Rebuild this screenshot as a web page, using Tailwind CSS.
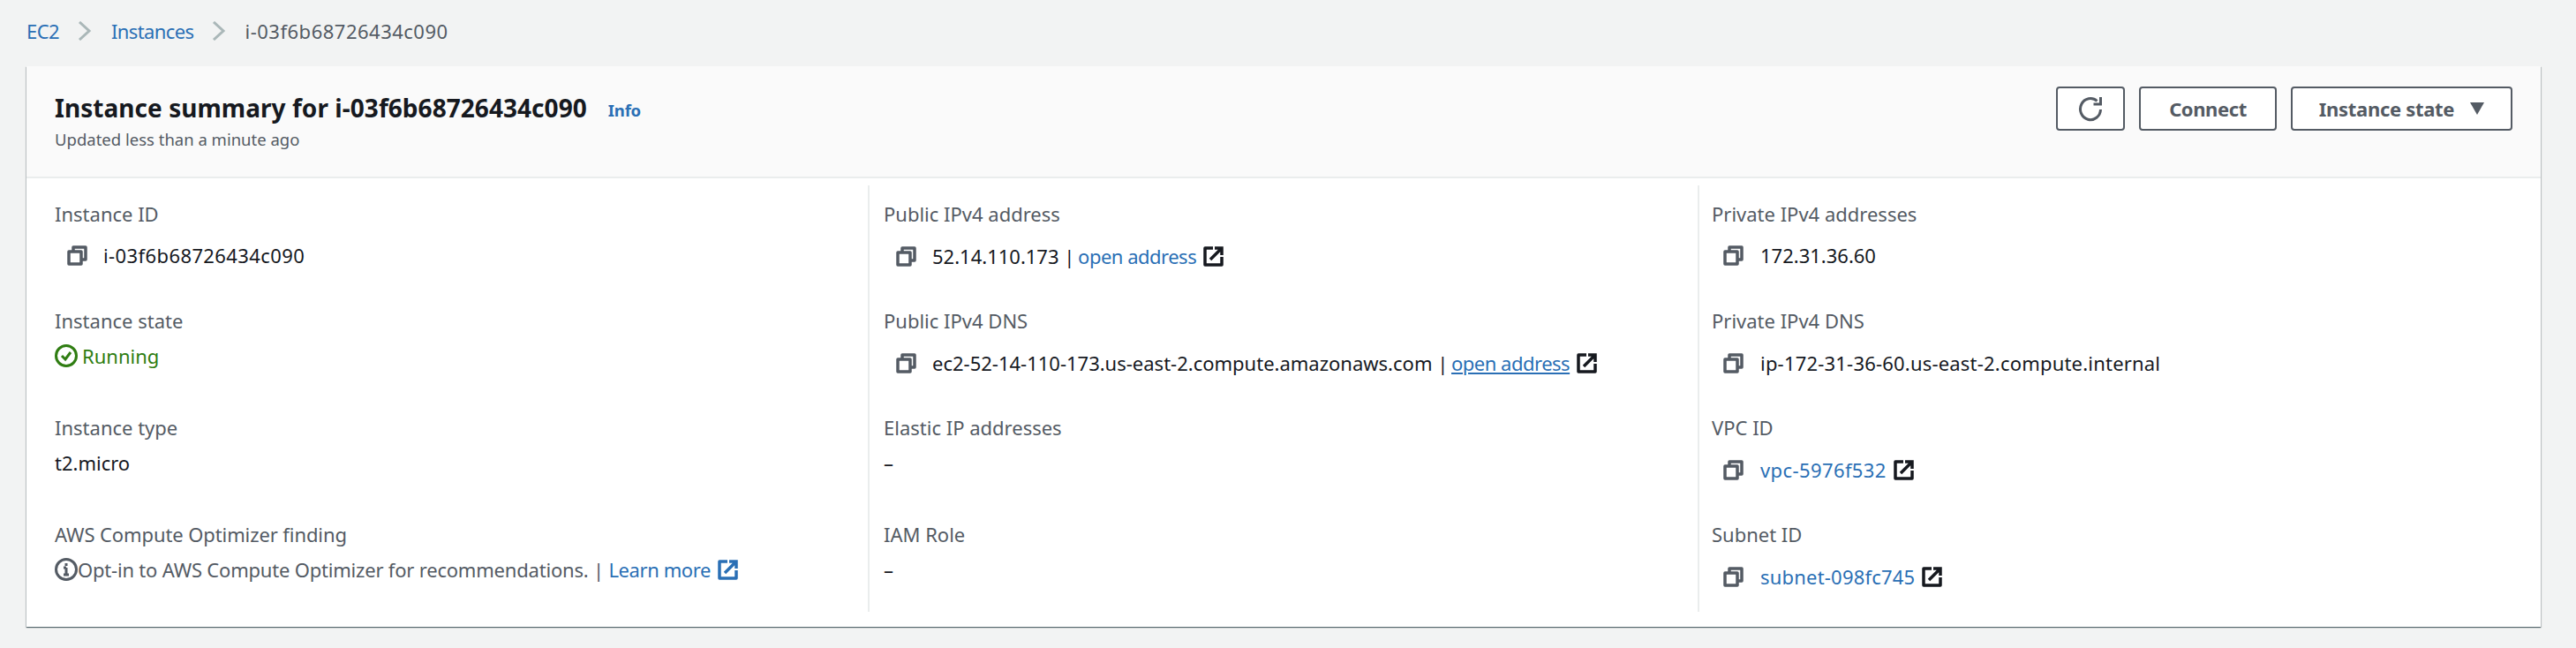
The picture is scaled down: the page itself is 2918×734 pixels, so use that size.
<!DOCTYPE html>
<html lang="en">
<head>
  <meta charset="UTF-8">
  <title>Instance summary</title>
  <script src="https://cdn.jsdelivr.net/npm/@tailwindcss/browser@4"></script>
</head>
<body class="h-[734px] overflow-hidden bg-[#f2f3f3] font-['Noto_Sans',sans-serif] text-[22px] text-[#16191f]">
  <svg class="hidden">
    <symbol id="copy" viewBox="0 0 23 23"><path d="M7 6V2h14v14h-5M2 7h14v14H2z" fill="none" stroke="currentColor" stroke-width="3.500" stroke-linejoin="round"/></symbol>
    <symbol id="ext" viewBox="0 0 23 23"><path d="M11 2H2v19h19v-9" fill="none" stroke="currentColor" stroke-width="3.500" stroke-linejoin="round"/><path d="M8 15 20 3M13 2h8v8" fill="none" stroke="currentColor" stroke-width="3.500"/></symbol>
  </svg>

  <nav class="h-[70px] mb-[5px] pl-[30px] flex items-center text-[#545b64]">
    <a class="text-[#2a6fb5] tracking-[-0.6px]">EC2</a>
    <svg class="w-4 h-[22px] ml-[21px] mr-[22px] text-[#aab7b8]" viewBox="0 0 16 22"><path d="m2 1 11 10L2 21" fill="none" stroke="currentColor" stroke-width="3"/></svg>
    <a class="text-[#2a6fb5] tracking-[-0.6px]">Instances</a>
    <svg class="w-4 h-[22px] ml-[20px] mr-[22px] text-[#aab7b8]" viewBox="0 0 16 22"><path d="m2 1 11 10L2 21" fill="none" stroke="currentColor" stroke-width="3"/></svg>
    <span class="tracking-[0.5px]">i-03f6b68726434c090</span>
  </nav>

  <section class="ml-[30px] w-[2848px] h-[635px] bg-white shadow-[0_1px_1px_0_rgba(0,28,36,0.5),1px_1px_1px_0_rgba(0,28,36,0.15),-1px_1px_1px_0_rgba(0,28,36,0.15)]">
    <header class="h-[127px] px-8 pt-[23px] flex justify-between bg-[#fafafa] border-b-2 border-[#eaeded]">
      <div>
        <div class="flex items-center h-12">
          <h1 class="text-[28px] font-bold leading-9 tracking-[0.05px]">Instance summary for i-03f6b68726434c090</h1>
          <a class="ml-6 text-[#2a6fb5] text-[18.500px] font-bold tracking-[-0.2px] mt-[5px]">Info</a>
        </div>
        <p class="text-[18.500px] leading-6 text-[#545b64]">Updated less than a minute ago</p>
      </div>
      <div class="flex gap-4 h-[50px] text-[#545b64]">
        <button class="w-[78px] flex items-center justify-center border-2 border-[#545b64] rounded-[4px] bg-white">
          <svg class="w-[28px] h-[30px]" viewBox="0 0 28 30"><path d="M25.500 16a11.500 12 0 1 1-4-9.500" fill="none" stroke="currentColor" stroke-width="3"/><path d="M25.500 2v8h-8" fill="none" stroke="currentColor" stroke-width="3"/></svg>
        </button>
        <button class="w-[156px] border-2 border-[#545b64] rounded-[4px] bg-white font-bold tracking-[-0.4px]">Connect</button>
        <button class="w-[251px] flex items-center justify-center gap-[18px] border-2 border-[#545b64] rounded-[4px] bg-white font-bold tracking-[-0.3px]">
          Instance state
          <svg class="w-4 h-[14px]" viewBox="0 0 16 14"><path d="M0 0h16L8 14z" fill="currentColor"/></svg>
        </button>
      </div>
    </header>

    <div class="grid grid-cols-[953px_940px_1fr] h-[483px] mt-2">
      <div class="pl-8 pt-4">
        <div class="h-[121px]">
          <div class="text-[#545b64] leading-8">Instance ID</div>
          <div class="mt-[15px] ml-[14px] flex items-center h-8"><svg class="w-[23px] h-[23px] mr-[18px] text-[#545b64]"><use href="#copy"/></svg><span class="tracking-[0.4px]">i-03f6b68726434c090</span></div>
        </div>
        <div class="h-[121px]">
          <div class="text-[#545b64] leading-8">Instance state</div>
          <div class="mt-2 flex items-center h-8 text-[#2f7d12]">
            <svg class="w-[26px] h-[26px] mr-[5px]" viewBox="0 0 26 26"><circle cx="13" cy="13" r="11.500" fill="none" stroke="currentColor" stroke-width="3"/><path d="m8 13 4 4 6-8" fill="none" stroke="currentColor" stroke-width="3"/></svg>Running
          </div>
        </div>
        <div class="h-[121px]">
          <div class="text-[#545b64] leading-8">Instance type</div>
          <div class="mt-2 leading-8">t2.micro</div>
        </div>
        <div>
          <div class="text-[#545b64] leading-8 tracking-[-0.1px]">AWS Compute Optimizer finding</div>
          <div class="mt-2 flex items-center h-8 text-[#545b64]">
            <svg class="w-[26px] h-[26px] shrink-0" viewBox="0 0 26 26"><circle cx="13" cy="13" r="11.500" fill="none" stroke="currentColor" stroke-width="3"/><path d="M13 6v3M13 11v8M10 19h6M10 11h3" fill="none" stroke="currentColor" stroke-width="3"/></svg>
            <span class="tracking-[-0.2px]">Opt-in to AWS Compute Optimizer for recommendations. | <a class="text-[#2a6fb5] tracking-[-0.4px]">Learn more</a></span>
            <svg class="w-[23px] h-[23px] ml-2 text-[#2a6fb5]"><use href="#ext"/></svg>
          </div>
        </div>
      </div>

      <div class="pl-4 pt-4 border-l-2 border-[#eaeded]">
        <div class="h-[121px]">
          <div class="text-[#545b64] leading-8">Public IPv4 address</div>
          <div class="mt-[16px] ml-[14px] flex items-center h-8"><svg class="w-[23px] h-[23px] mr-[18px] text-[#545b64]"><use href="#copy"/></svg>52.14.110.173 |&nbsp;<a class="text-[#2a6fb5] tracking-[-0.5px] -ml-[2px]">open address</a><svg class="w-[23px] h-[23px] ml-2"><use href="#ext"/></svg></div>
        </div>
        <div class="h-[121px]">
          <div class="text-[#545b64] leading-8">Public IPv4 DNS</div>
          <div class="mt-[16px] ml-[14px] flex items-center h-8"><svg class="w-[23px] h-[23px] mr-[18px] text-[#545b64]"><use href="#copy"/></svg>ec2-52-14-110-173.us-east-2.compute.amazonaws.com |&nbsp;<a class="text-[#2a6fb5] underline tracking-[-0.5px] -ml-[2px]">open address</a><svg class="w-[23px] h-[23px] ml-2"><use href="#ext"/></svg></div>
        </div>
        <div class="h-[121px]">
          <div class="text-[#545b64] leading-8">Elastic IP addresses</div>
          <div class="mt-2 leading-8">–</div>
        </div>
        <div>
          <div class="text-[#545b64] leading-8">IAM Role</div>
          <div class="mt-2 leading-8">–</div>
        </div>
      </div>

      <div class="pl-[14px] pt-4 border-l-2 border-[#eaeded]">
        <div class="h-[121px]">
          <div class="text-[#545b64] leading-8">Private IPv4 addresses</div>
          <div class="mt-[15px] ml-[13px] flex items-center h-8"><svg class="w-[23px] h-[23px] mr-[19px] text-[#545b64]"><use href="#copy"/></svg>172.31.36.60</div>
        </div>
        <div class="h-[121px]">
          <div class="text-[#545b64] leading-8">Private IPv4 DNS</div>
          <div class="mt-[16px] ml-[13px] flex items-center h-8"><svg class="w-[23px] h-[23px] mr-[19px] text-[#545b64]"><use href="#copy"/></svg><span class="tracking-[0.2px]">ip-172-31-36-60.us-east-2.compute.internal</span></div>
        </div>
        <div class="h-[121px]">
          <div class="text-[#545b64] leading-8">VPC ID</div>
          <div class="mt-[16px] ml-[13px] flex items-center h-8"><svg class="w-[23px] h-[23px] mr-[19px] text-[#545b64]"><use href="#copy"/></svg><a class="text-[#2a6fb5] tracking-[0.4px]">vpc-5976f532</a><svg class="w-[23px] h-[23px] ml-2"><use href="#ext"/></svg></div>
        </div>
        <div>
          <div class="text-[#545b64] leading-8">Subnet ID</div>
          <div class="mt-[16px] ml-[13px] flex items-center h-8"><svg class="w-[23px] h-[23px] mr-[19px] text-[#545b64]"><use href="#copy"/></svg><a class="text-[#2a6fb5] tracking-[0.2px]">subnet-098fc745</a><svg class="w-[23px] h-[23px] ml-2"><use href="#ext"/></svg></div>
        </div>
      </div>
    </div>
  </section>
</body>
</html>
